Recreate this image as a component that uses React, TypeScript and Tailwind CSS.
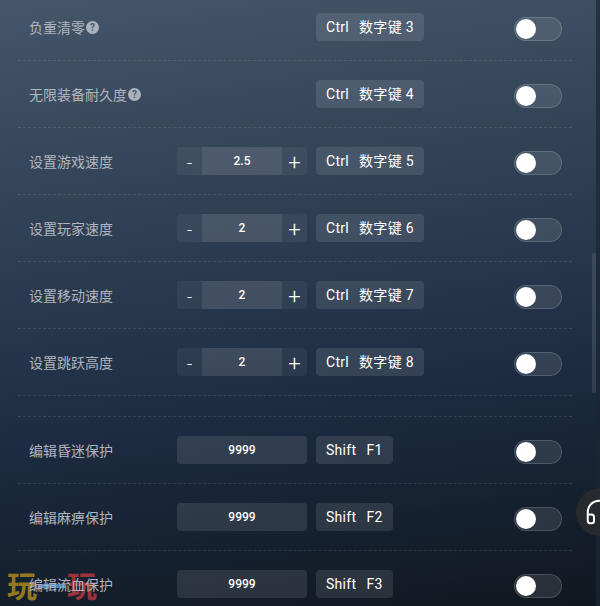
import { Headphones } from 'lucide-react';

type Row = {
  label: string;
  help?: boolean;
  step?: string;
  amount?: string;
  keys: [string, string];
};

const cjk = "font-['Roboto','Noto_Sans_CJK_SC',sans-serif]";

const topRows: Row[] = [
  { label: '负重清零', help: true, keys: ['Ctrl', '数字键 3'] },
  { label: '无限装备耐久度', help: true, keys: ['Ctrl', '数字键 4'] },
  { label: '设置游戏速度', step: '2.5', keys: ['Ctrl', '数字键 5'] },
  { label: '设置玩家速度', step: '2', keys: ['Ctrl', '数字键 6'] },
  { label: '设置移动速度', step: '2', keys: ['Ctrl', '数字键 7'] },
  { label: '设置跳跃高度', step: '2', keys: ['Ctrl', '数字键 8'] },
];

const bottomRows: Row[] = [
  { label: '编辑昏迷保护', amount: '9999', keys: ['Shift', 'F1'] },
  { label: '编辑麻痹保护', amount: '9999', keys: ['Shift', 'F2'] },
  { label: '编辑流血保护', amount: '9999', keys: ['Shift', 'F3'] },
];

function CheatRow({ row }: { row: Row }) {
  return (
    <div className="flex h-[67px] items-center border-b border-dashed border-white/10 pl-[11px] pr-[10px] pb-px">
      <div className="flex w-[148px] items-center pt-0.5 text-sm text-[#b0b5be]">
        {row.label}
        {row.help && (
          <span className="ml-px flex h-[13px] w-[13px] items-center justify-center rounded-full bg-[#a9b2bd] text-[10px] font-bold leading-none text-[#4a5a6c]">
            ?
          </span>
        )}
      </div>
      <div className="w-[139px]">
        {row.step && (
          <div className="flex h-[28px] w-[130px] overflow-hidden rounded bg-white/5 text-white">
            <span className="flex w-[25px] items-center justify-center pt-1 text-lg font-light">-</span>
            <span className="flex w-[80px] items-center justify-center bg-white/[0.08] text-xs font-medium">
              {row.step}
            </span>
            <span className="flex w-[25px] items-center justify-center pt-1 text-[22px] font-light leading-none">
              +
            </span>
          </div>
        )}
        {row.amount && (
          <div className="flex h-[28px] w-[130px] items-center justify-center rounded bg-white/10 text-xs font-medium text-white">
            {row.amount}
          </div>
        )}
      </div>
      <div className="flex h-[28px] items-center gap-[10px] rounded bg-white/10 px-[10px] text-sm tracking-[0.3px] text-white">
        <span>{row.keys[0]}</span>
        <span>{row.keys[1]}</span>
      </div>
      <button className="ml-auto mt-1 flex h-6 w-12 items-center rounded-full border border-white/15 bg-white/10 pl-px">
        <span className="h-5 w-5 rounded-full bg-white" />
      </button>
    </div>
  );
}

export default function App() {
  return (
    <div
      className={`relative flex h-[606px] w-[600px] overflow-hidden bg-[linear-gradient(172deg,#45566a_0%,#1c2b41_66%,#10171f_100%)] ${cjk}`}
    >
      {/* watermark sits under the rows */}
      <div className="pointer-events-none absolute left-[7px] top-[570px] flex items-center text-[30px] font-bold leading-[34px]">
        <span className="text-[#96791f]">玩</span>
        <span className="text-[#4f86b8]">一</span>
        <span className="text-[#98343a]">玩</span>
      </div>

      <div className="relative ml-[18px] mr-[24px] -mt-[6px] flex-1">
        {topRows.map((row) => (
          <CheatRow key={row.label} row={row} />
        ))}
        <div className="h-[21px] border-b border-dashed border-white/10" />
        {bottomRows.map((row) => (
          <CheatRow key={row.label} row={row} />
        ))}
      </div>

      {/* scrollbar */}
      <div className="w-1 bg-[#1b2636]/70" />
      <div className="absolute left-[592px] top-[253px] h-[140px] w-1 rounded-full bg-white/10" />

      {/* floating support button */}
      <div className="absolute left-[576px] top-[488px] flex h-12 w-12 items-center rounded-full bg-[#26292d] pl-2">
        <Headphones size={30} color="#ffffff" strokeWidth={1.6} />
      </div>
    </div>
  );
}
